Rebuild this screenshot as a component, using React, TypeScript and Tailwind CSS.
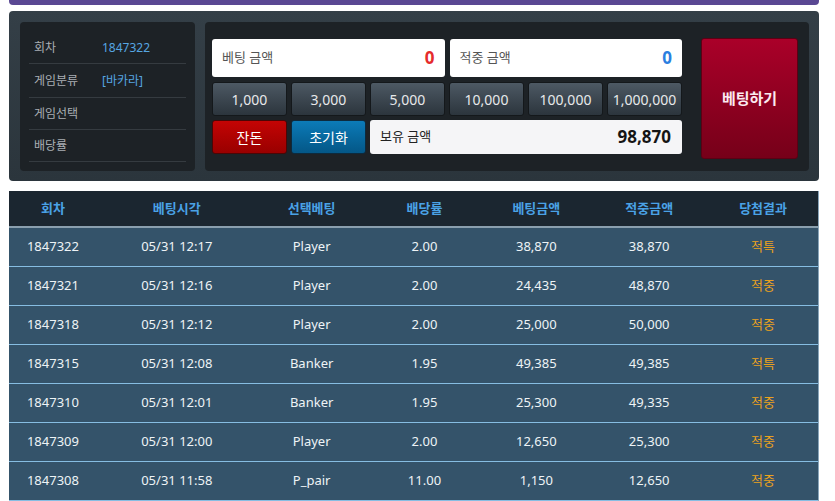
import React from 'react';

const info = [
  { label: '회차', value: '1847322', h: 'h-[32px]' },
  { label: '게임분류', value: '[바카라]', h: 'h-[34px]' },
  { label: '게임선택', value: '', h: 'h-[32px]' },
  { label: '배당률', value: '', h: 'h-[32px]' },
];

const chips = ['1,000', '3,000', '5,000', '10,000', '100,000', '1,000,000'];

const rows = [
  ['1847322', '05/31 12:17', 'Player', '2.00', '38,870', '38,870', '적특'],
  ['1847321', '05/31 12:16', 'Player', '2.00', '24,435', '48,870', '적중'],
  ['1847318', '05/31 12:12', 'Player', '2.00', '25,000', '50,000', '적중'],
  ['1847315', '05/31 12:08', 'Banker', '1.95', '49,385', '49,385', '적특'],
  ['1847310', '05/31 12:01', 'Banker', '1.95', '25,300', '49,335', '적중'],
  ['1847309', '05/31 12:00', 'Player', '2.00', '12,650', '25,300', '적중'],
  ['1847308', '05/31 11:58', 'P_pair', '11.00', '1,150', '12,650', '적중'],
];

const headers = ['회차', '베팅시각', '선택베팅', '배당률', '베팅금액', '적중금액', '당첨결과'];
const colW = ['w-[88px]', 'w-[160px]', 'w-[110px]', 'w-[116px]', 'w-[108px]', 'w-[118px]', 'w-[110px]'];

const App: React.FC = () => {
  return (
    <div className="w-[835px] h-[501px] overflow-hidden bg-white [font-family:'Noto_Sans','Noto_Sans_CJK_KR',sans-serif]">
      {/* top bar */}
      <div className="mx-[9px] w-[810px] h-[5px] rounded-b-[4px] bg-[#5a4893]" />

      {/* bet panel */}
      <div className="mx-[9px] mt-[6px] w-[810px] h-[170px] rounded-[4px] bg-gradient-to-b from-[#343f47] to-[#2b353c] pl-[11px] pt-[11px] pr-[10px] pb-[10px] flex gap-[10px]">
        {/* info box */}
        <div className="w-[175px] h-[149px] rounded-[4px] bg-[#1d2226] px-[9px] pt-[10px]">
          {info.map((it) => (
            <div key={it.label} className={`${it.h} flex items-center border-b border-[#353b40] pl-[5px] text-[12px]`}>
              <span className="w-[68px] text-[#a9afb4]">{it.label}</span>
              <span className="text-[#56a6e2]">{it.value}</span>
            </div>
          ))}
        </div>

        {/* controls */}
        <div className="flex-1 h-[149px] rounded-[4px] bg-[#1d2226] pl-[7px] pt-[16px] flex">
          <div className="w-[470px] mt-[1px]">
            <div className="grid grid-cols-2 gap-[5px]">
              <div className="h-[38px] rounded-[3px] bg-white flex items-center justify-between px-[10px]">
                <span className="text-[13px] text-[#555]">베팅 금액</span>
                <span className="text-[17px] font-bold text-[#e52b2b]">0</span>
              </div>
              <div className="h-[38px] rounded-[3px] bg-white flex items-center justify-between px-[10px]">
                <span className="text-[13px] text-[#555]">적중 금액</span>
                <span className="text-[17px] font-bold text-[#2b7fe0]">0</span>
              </div>
            </div>
            <div className="grid grid-cols-6 gap-[4px] mt-[5px]">
              {chips.map((c) => (
                <button
                  key={c}
                  className="h-[34px] rounded-[3px] border border-[#14181b] bg-gradient-to-b from-[#4d5964] to-[#2c353d] text-[14px] text-[#e6e8ea]"
                >
                  {c}
                </button>
              ))}
            </div>
            <div className="grid grid-cols-6 gap-[4px] mt-[4px]">
              <button className="h-[34px] rounded-[3px] border border-[#4a0606] bg-gradient-to-b from-[#c40404] to-[#990000] text-[14px] text-white">
                잔돈
              </button>
              <button className="h-[34px] rounded-[3px] border border-[#0d2a3d] bg-gradient-to-b from-[#0c7bb8] to-[#045787] text-[14px] text-white">
                초기화
              </button>
              <div className="col-span-4 h-[34px] rounded-[3px] bg-[#f5f5f7] flex items-center justify-between pl-[10px] pr-[11px]">
                <span className="text-[13px] text-[#222]">보유 금액</span>
                <span className="text-[17px] font-bold text-[#151515]">98,870</span>
              </div>
            </div>
          </div>
          <button className="ml-[19px] w-[97px] h-[121px] rounded-[3px] border border-[#5c0014] bg-gradient-to-b from-[#aa0029] to-[#760019] text-[15px] font-bold text-[#fbeaf0]">
            베팅하기
          </button>
        </div>
      </div>

      {/* history table */}
      <div className="mx-[9px] mt-[10px] w-[810px] border-r border-[#8aa6bb]">
        <div className="flex h-[37px] items-center bg-[#1b2630] border-b-2 border-[#8a9fae]">
          {headers.map((h, i) => (
            <div key={h} className={`${colW[i]} text-center text-[13px] font-semibold text-[#4aa2e6]`}>
              {h}
            </div>
          ))}
        </div>
        {rows.map((r) => (
          <div key={r[0]} className="flex h-[39px] items-center bg-[#34536a] border-b border-[#86bde2]">
            {r.map((cell, i) => (
              <div
                key={i}
                className={`${colW[i]} text-center text-[13px] ${i === 6 ? 'text-[#eba21c]' : 'text-[#eef3f6]'}`}
              >
                {cell}
              </div>
            ))}
          </div>
        ))}
      </div>
    </div>
  );
};

export default App;
